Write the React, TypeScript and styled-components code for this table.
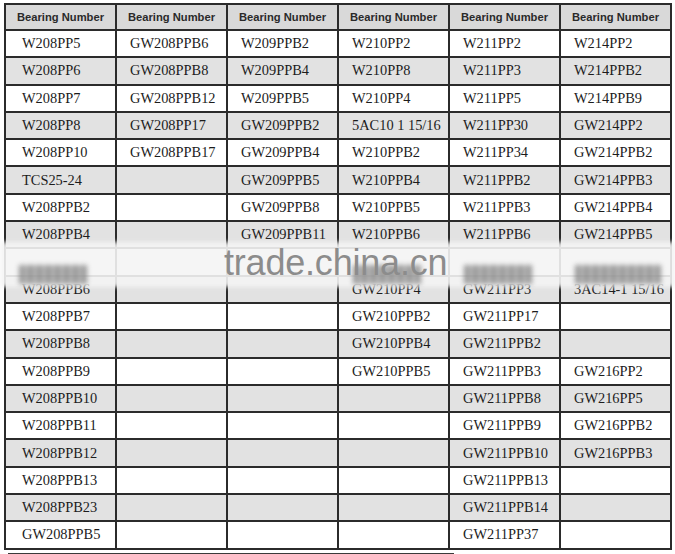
import React from 'react';
import styled, {createGlobalStyle} from 'styled-components';

const GlobalStyle = createGlobalStyle`
  html, body {
    margin: 0;
    padding: 0;
    background: #ffffff;
  }
`;

const _Page = styled.div`
  width: 675px;
  height: 554px;
  padding: 3px 0 0 4px;
  box-sizing: border-box;
  overflow: hidden;
  background: #ffffff;
`;

const _TableWrapper = styled.div`
  position: relative;
  width: 668px;
`;

const _Table = styled.table`
  width: 668px;
  table-layout: fixed;
  border-collapse: collapse;
  border: 2px solid #2b2b2b;
`;

const _HeaderRow = styled.tr`
  height: 26px;
  background-color: #d9d9d9;
`;

type _RowPropsType = {
  $striped: boolean
}

const _Row = styled.tr<_RowPropsType>`
  height: 27.3px;
  background-color: ${props => props.$striped ? '#e2e2e2' : '#ffffff'};
`;

const _HeadCell = styled.th`
  padding: 0;
  border: 2px solid #2b2b2b;
  font-family: "Liberation Sans", Arial, sans-serif;
  font-size: 11.2px;
  font-weight: 700;
  color: #2a2a2a;
  text-align: center;
`;

const _Cell = styled.td`
  padding: 0 0 0 13px;
  border: 2px solid #2b2b2b;
  font-family: "Liberation Serif", "Times New Roman", serif;
  font-size: 14.4px;
  color: #1c1c1c;
  white-space: nowrap;
  &:first-child {
    padding-left: 16px;
  }
`;

const _Watermark = styled.div`
  position: absolute;
  left: -4px;
  right: -4px;
  top: 239px;
  height: 45px;
  pointer-events: none;
`;

const _Band = styled.div`
  position: absolute;
  inset: 0;
  background: rgba(244, 244, 244, 0.9);
  filter: blur(2px);
`;

const _SmudgeRow = styled.div`
  position: absolute;
  left: 4px;
  right: 4px;
  top: 23px;
  display: grid;
  grid-template-columns: 111px 112px 111px 111px 111px 112px;
`;

type _SmudgePropsType = {
  $width: number
}

const _Smudge = styled.div<_SmudgePropsType>`
  width: ${props => props.$width}px;
  height: ${props => props.$width ? 19 : 0}px;
  margin-left: 15px;
  background: repeating-linear-gradient(90deg, #7a7a7a 0 5px, #a3a3a3 5px 9px);
  opacity: 0.75;
  filter: blur(2.4px);
`;

const _MarkText = styled.div`
  position: absolute;
  left: 224px;
  top: 0;
  font-family: "Liberation Sans", Arial, sans-serif;
  font-size: 36px;
  color: #8c8c8c;
  letter-spacing: -0.2px;
`;

const _StrayLine = styled.div`
  width: 446px;
  margin: 3px 0 0 4px;
  border-top: 2px solid #3a3a3a;
`;

const columns: string[][] = [
  ['W208PP5', 'W208PP6', 'W208PP7', 'W208PP8', 'W208PP10', 'TCS25-24', 'W208PPB2', 'W208PPB4', '', 'W208PPB6',
    'W208PPB7', 'W208PPB8', 'W208PPB9', 'W208PPB10', 'W208PPB11', 'W208PPB12', 'W208PPB13', 'W208PPB23', 'GW208PPB5'],
  ['GW208PPB6', 'GW208PPB8', 'GW208PPB12', 'GW208PP17', 'GW208PPB17'],
  ['W209PPB2', 'W209PPB4', 'W209PPB5', 'GW209PPB2', 'GW209PPB4', 'GW209PPB5', 'GW209PPB8', 'GW209PPB11'],
  ['W210PP2', 'W210PP8', 'W210PP4', '5AC10 1 15/16', 'W210PPB2', 'W210PPB4', 'W210PPB5', 'W210PPB6', '', 'GW210PP4',
    'GW210PPB2', 'GW210PPB4', 'GW210PPB5'],
  ['W211PP2', 'W211PP3', 'W211PP5', 'W211PP30', 'W211PP34', 'W211PPB2', 'W211PPB3', 'W211PPB6', '', 'GW211PP3',
    'GW211PP17', 'GW211PPB2', 'GW211PPB3', 'GW211PPB8', 'GW211PPB9', 'GW211PPB10', 'GW211PPB13', 'GW211PPB14', 'GW211PP37'],
  ['W214PP2', 'W214PPB2', 'W214PPB9', 'GW214PP2', 'GW214PPB2', 'GW214PPB3', 'GW214PPB4', 'GW214PPB5', '', '3AC14-1 15/16',
    '', '', 'GW216PP2', 'GW216PP5', 'GW216PPB2', 'GW216PPB3'],
];

// blurred remains of the row hidden under the watermark
const smudgeWidths = [68, 0, 0, 68, 68, 86];

const ROW_COUNT = 19;

export default function App() {
  const rows = Array.from({length: ROW_COUNT}, (_, r) => columns.map(col => col[r] || ''));

  return <_Page>
    <GlobalStyle/>
    <_TableWrapper>
      <_Table>
        <thead>
          <_HeaderRow>
            {columns.map((_, i) => <_HeadCell key={i}>Bearing Number</_HeadCell>)}
          </_HeaderRow>
        </thead>
        <tbody>
          {rows.map((row, r) =>
            <_Row key={r} $striped={r % 2 === 1}>
              {row.map((text, c) => <_Cell key={c}>{text}</_Cell>)}
            </_Row>)}
        </tbody>
      </_Table>
      <_Watermark>
        <_Band/>
        <_SmudgeRow>
          {smudgeWidths.map((w, i) => <_Smudge key={i} $width={w}/>)}
        </_SmudgeRow>
        <_MarkText>trade.china.cn</_MarkText>
      </_Watermark>
    </_TableWrapper>
    <_StrayLine/>
  </_Page>;
}
